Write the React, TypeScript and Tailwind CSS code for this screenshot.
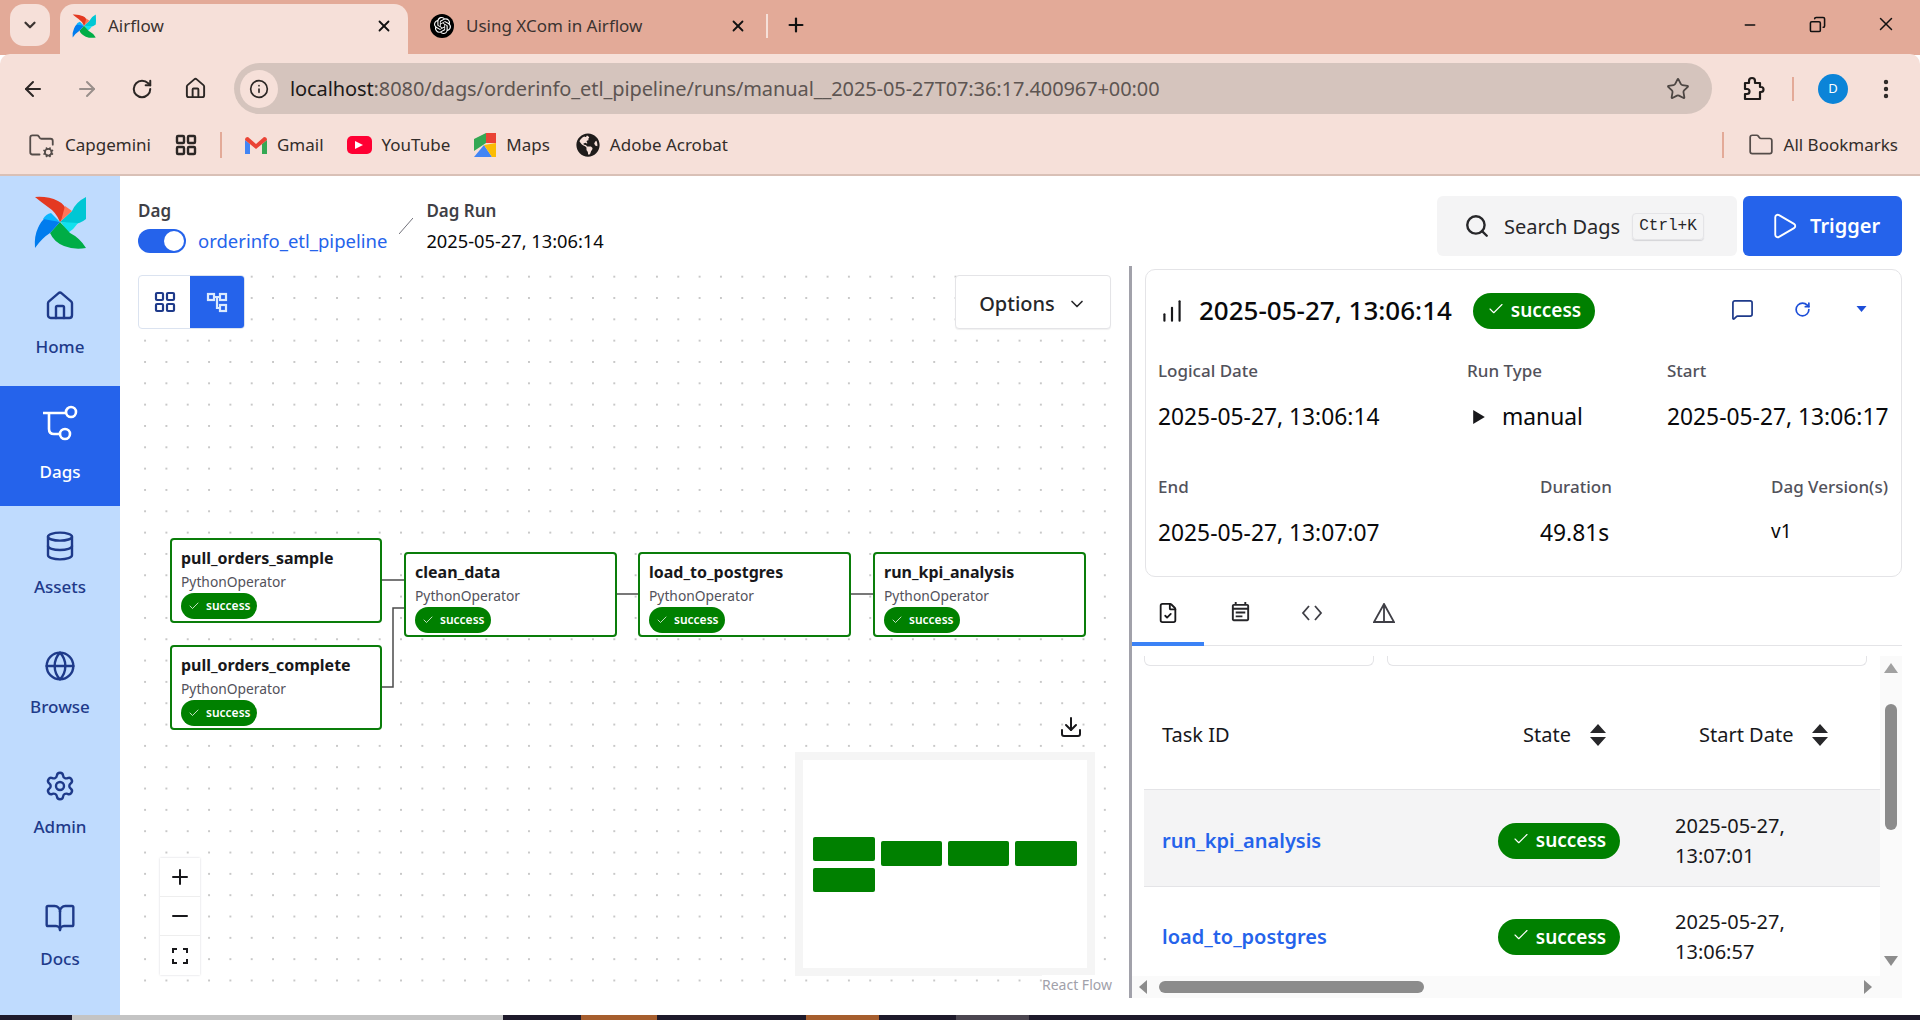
import React from "react";
import { ArrowLeft, ArrowRight, RotateCw, Home, Info, Star, Folder, FolderCog, LayoutGrid, Search, Play, Database, Globe, Settings, BookOpen, ChevronDown, MessageSquare, Check, Plus, Minus, Download, X, FileCheck, MoreVertical, Copy, ChartNoAxesColumnIncreasing } from "lucide-react";
import { MdOutlineEventNote } from "react-icons/md";
import { SiOpenai } from "react-icons/si";
import { FaGlobeAmericas } from "react-icons/fa";

function Pinwheel({ className }: { className: string }) {
  return (
    <svg viewBox="0 0 52 53" className={className}>
      <path d="M52 1 Q53 14 52 23 Q46 28 39 28 L26 26 L38 15 Q42 6 52 1Z" fill="#00c7d4" />
      <path d="M27 26 L44 27 Q40 33 34 37Z" fill="#11e1ee" />
      <path d="M52 52 Q40 54 30 50 Q20 46 16 37 L26 26 L36 37 Q46 42 52 52Z" fill="#00ad46" />
      <path d="M1 52 Q0 40 4 32 Q7 25 12 21 L26 26 L16 37 Q8 42 1 52Z" fill="#017cee" />
      <path d="M26 26 L9 23 Q12 18 17 17Z" fill="#0cb6ff" />
      <path d="M1 1 Q14 0 24 5 Q33 9 32 18 L26 26 Q22 16 14 11 Q7 6 1 1Z" fill="#e43921" />
      <path d="M31 10 L38 15 L27 25Z" fill="#ff7557" />
    </svg>
  );
}

function DagIcon() {
  return (
    <svg viewBox="0 0 38 38" className="w-[38px] h-[38px] mb-[4px]" fill="none" stroke="white" strokeWidth="2.6">
      <circle cx="30" cy="7" r="5" />
      <circle cx="24" cy="29" r="5" />
      <path d="M2 8 H25 M8 8 V24 Q8 29 13 29 H19" />
    </svg>
  );
}

function Sort() {
  return (
    <svg viewBox="0 0 16 22" className="w-[16px] h-[22px]" fill="#27272a">
      <path d="M8 0 L16 9 H0Z M0 13 H16 L8 22Z" />
    </svg>
  );
}

function Badge({ size }: { size: "sm" | "lg" }) {
  if (size === "sm") {
    return (
      <span className="inline-flex items-center w-fit h-[26px] px-[7px] gap-[6px] rounded-full bg-[#008000] text-white text-[12px] font-semibold">
        <Check size={12} strokeWidth={1.5} />
        success
      </span>
    );
  }
  return (
    <span className="inline-flex items-center justify-center w-[122px] h-[36px] gap-[6px] rounded-full bg-[#008000] text-white text-[19px] font-semibold">
      <Check size={18} strokeWidth={1.5} className="-mt-[4px]" />
      success
    </span>
  );
}

function TaskNode({ name, style }: { name: string; style: React.CSSProperties }) {
  return (
    <div style={style} className="absolute h-[85px] flex flex-col border-[2px] border-[#0a7d0a] rounded-[4px] bg-white pl-[9px] pt-[6px]">
      <span className="text-[16px] leading-[25px] font-bold text-[#18181b]">{name}</span>
      <span className="text-[13.8px] leading-[22px] text-[#52525b]">PythonOperator</span>
      <Badge size="sm" />
    </div>
  );
}

function NavItem({ label, icon, active, cls }: { label: string; icon: React.ReactNode; active?: boolean; cls: string }) {
  return (
    <div className={`flex flex-col items-center justify-center gap-[13px] pb-[3px] w-full ${cls} ${active ? "bg-[#2563eb] text-white" : "text-[#1e3a8a]"}`}>
      {icon}
      <span className="text-[17px] leading-[24px] font-medium">{label}</span>
    </div>
  );
}

function Bookmark({ icon, label, cls }: { icon: React.ReactNode; label: string; cls: string }) {
  return (
    <div className={`flex items-center gap-[10px] ${cls}`}>
      {icon}
      <span>{label}</span>
    </div>
  );
}

function Field({ label, value, cls }: { label: string; value: React.ReactNode; cls: string }) {
  return (
    <div className={`flex flex-col ${cls}`}>
      <span className="text-[17px] leading-[24px] font-medium text-[#52525b] whitespace-nowrap">{label}</span>
      <span className="mt-[22px] text-[22.8px] leading-[24px] text-[#09090b] whitespace-nowrap">{value}</span>
    </div>
  );
}

function Row({ name, d1, d2, cls }: { name: string; d1: string; d2: string; cls: string }) {
  return (
    <div className={`flex items-center ${cls}`}>
      <span className="w-[354px] pl-[18px] text-[20px] font-semibold text-[#2563eb]">{name}</span>
      <div className="w-[177px]"><Badge size="lg" /></div>
      <div className="text-[20px] leading-[30px] text-[#18181b]">
        <div>{d1}</div>
        <div>{d2}</div>
      </div>
    </div>
  );
}

const dots = "bg-[radial-gradient(#c8c8c8_1px,transparent_1.2px)] bg-[length:21.33px_21.33px] bg-[position:-3.6px_0px]";

export default function App() {
  return (
    <div className="w-[1920px] h-[1020px] flex flex-col overflow-hidden bg-white font-['Noto_Sans',sans-serif]">
      {/* Browser tab strip */}
      <div className="h-[55px] shrink-0 bg-[#e3aa98] flex items-end text-[#3b3330] text-[17px]">
        <div className="ml-[10px] mb-[9px] w-[40px] h-[42px] rounded-[14px] bg-[#f6e0d9] flex items-center justify-center">
          <ChevronDown size={18} strokeWidth={3} />
        </div>
        <div className="ml-[10px] w-[348px] h-[51px] rounded-t-[14px] bg-[#f6e0d9] flex items-center pl-[12px] pb-[8px]">
          <Pinwheel className="w-[24px] h-[24px]" />
          <span className="ml-[12px] flex-1">Airflow</span>
          <X size={18} strokeWidth={2.4} className="mr-[15px] text-[#111]" />
        </div>
        <div className="w-[360px] h-[51px] flex items-center pl-[22px] pb-[8px]">
          <span className="w-[24px] h-[24px] rounded-full bg-black flex items-center justify-center">
            <SiOpenai size={17} color="white" />
          </span>
          <span className="ml-[12px] flex-1">Using XCom in Airflow</span>
          <X size={18} strokeWidth={2.4} className="mr-[19px] text-[#111]" />
          <span className="w-[2px] h-[24px] bg-[#f6e0d9]" />
        </div>
        <Plus size={22} strokeWidth={2.4} className="ml-[17px] mb-[19px] text-[#111]" />
        <div className="flex-1" />
        <Minus size={16} strokeWidth={2.4} className="mb-[22px] text-[#111]" />
        <Copy size={17} strokeWidth={2.2} className="ml-[51px] mb-[22px] text-[#111] -scale-x-100" />
        <X size={22} strokeWidth={1.6} className="ml-[49px] mb-[20px] mr-[23px] text-[#111]" />
      </div>
      {/* Toolbar */}
      <div className="h-[69px] shrink-0 bg-[#f6e0d9] flex items-center text-[#2c2725] rounded-t-[10px] -mt-px">
        <ArrowLeft size={24} strokeWidth={2} className="ml-[21px]" />
        <ArrowRight size={24} strokeWidth={2} className="ml-[30px] text-[#998f8b]" />
        <RotateCw size={22} strokeWidth={2.2} className="ml-[32px]" />
        <Home size={23} strokeWidth={2} className="ml-[31px]" />
        <div className="ml-[27px] w-[1478px] h-[51px] rounded-full bg-[#d5c4bd] flex items-center pl-[6px] pr-[22px]">
          <span className="w-[38px] h-[38px] rounded-full bg-[#f6e0d9] flex items-center justify-center">
            <Info size={20} strokeWidth={2} />
          </span>
          <span className="ml-[12px] flex-1 text-[20px] tracking-[-0.1px] text-[#5d5552]">
            <span className="text-[#1c1a19]">localhost</span>:8080/dags/orderinfo_etl_pipeline/runs/manual__2025-05-27T07:36:17.400967+00:00
          </span>
          <Star size={24} strokeWidth={1.8} className="text-[#4d4643]" />
        </div>
        <svg viewBox="0 0 24 26" className="ml-[29px] w-[24px] h-[26px]" fill="none" stroke="#1f1b1a" strokeWidth="2.2" strokeLinejoin="round">
          <path d="M4 7 H8 V5 A3 3 0 0 1 14 5 V7 H19 V11 H20 A2.5 2.5 0 0 1 20 16 H19 V23 H4 V18 H6 A2.5 2.5 0 0 0 6 13 H4Z" />
        </svg>
        <span className="ml-[27px] w-[2px] h-[24px] bg-[#e3aa98]" />
        <span className="ml-[24px] w-[30px] h-[30px] rounded-full bg-[#0b84d8] text-white text-[13px] flex items-center justify-center">D</span>
        <MoreVertical size={24} strokeWidth={2.4} className="ml-[26px]" />
      </div>
      {/* Bookmarks */}
      <div className="h-[53px] shrink-0 pb-[7px] bg-[#f6e0d9] border-b-[2px] border-[#d9c0b6] flex items-center text-[17px] text-[#332d2a]">
        <Bookmark cls="ml-[28px]" label="Capgemini" icon={<FolderCog size={27} strokeWidth={1.6} className="text-[#544c49]" />} />
        <LayoutGrid size={24} strokeWidth={2.4} className="ml-[23px] text-[#2c2725]" />
        <span className="ml-[22px] w-[2px] h-[26px] bg-[#e3aa98]" />
        <Bookmark cls="ml-[23px]" label="Gmail" icon={
          <svg viewBox="0 0 22 17" className="w-[22px] h-[17px]"><path d="M0 3 V17 H5 V7Z" fill="#4285f4" /><path d="M22 3 V17 H17 V7Z" fill="#34a853" /><path d="M0 3 Q0 0 3 0 L11 7 L19 0 Q22 0 22 3 L11 12Z" fill="#ea4335" /></svg>
        } />
        <Bookmark cls="ml-[23px]" label="YouTube" icon={
          <span className="w-[25px] h-[18px] rounded-[5px] bg-[#ff0033] flex items-center justify-center"><svg viewBox="0 0 8 8" className="w-[8px] h-[8px]"><path d="M0 0 L8 4 L0 8Z" fill="white" /></svg></span>
        } />
        <Bookmark cls="ml-[24px]" label="Maps" icon={
          <svg viewBox="0 0 22 24" className="w-[22px] h-[24px]"><path d="M0 6 L12 0 V10 L0 18Z" fill="#34a853" /><path d="M12 0 L22 0 V10 L12 10Z" fill="#ea4335" /><path d="M0 24 L10 12 L18 24Z" fill="#4285f4" /><path d="M10 12 L22 10 V24 H18Z" fill="#fbbc04" /></svg>
        } />
        <Bookmark cls="ml-[26px]" label="Adobe Acrobat" icon={<FaGlobeAmericas size={24} className="text-[#1f1c1b]" />} />
        <div className="flex-1" />
        <span className="w-[2px] h-[26px] bg-[#e3aa98]" />
        <Bookmark cls="ml-[24px] mr-[22px]" label="All Bookmarks" icon={<Folder size={26} strokeWidth={1.6} className="text-[#544c49]" />} />
      </div>
      {/* Airflow app */}
      <div className="flex flex-1 min-h-0">
        <nav className="w-[120px] shrink-0 bg-[#bfdbfe] flex flex-col items-center">
          <div className="h-[90px] shrink-0 flex items-center justify-center pt-[2px]">
            <Pinwheel className="w-[52px] h-[53px]" />
          </div>
          <NavItem cls="h-[120px]" label="Home" icon={<Home size={32} strokeWidth={1.8} />} />
          <NavItem cls="h-[120px]" active label="Dags" icon={<DagIcon />} />
          <NavItem cls="h-[120px]" label="Assets" icon={<Database size={32} strokeWidth={1.8} />} />
          <NavItem cls="h-[120px]" label="Browse" icon={<Globe size={32} strokeWidth={1.8} />} />
          <NavItem cls="h-[120px]" label="Admin" icon={<Settings size={32} strokeWidth={1.8} />} />
          <NavItem cls="h-[144px]" label="Docs" icon={<BookOpen size={32} strokeWidth={1.8} />} />
        </nav>
        <main className="flex-1 min-w-0 flex flex-col">
          <header className="h-[90px] shrink-0 flex pl-[18px] pr-[18px]">
            <div className="pt-[23px]">
              <div className="text-[17px] leading-[24px] font-semibold text-[#3f3f46]">Dag</div>
              <div className="flex items-center h-[32px] mt-[2px]">
                <span className="w-[48px] h-[24px] rounded-full bg-[#2563eb] flex items-center justify-end pr-[2px]"><span className="w-[20px] h-[20px] rounded-full bg-white" /></span>
                <span className="ml-[12px] text-[18.5px] text-[#2563eb]">orderinfo_etl_pipeline</span>
              </div>
            </div>
            <svg viewBox="0 0 14 16" className="w-[14px] h-[16px] ml-[12px] mt-[42px]"><path d="M0 16 L14 0" stroke="#71717a" strokeWidth="1" /></svg>
            <div className="pt-[23px] ml-[13px]">
              <div className="text-[17px] leading-[24px] font-semibold text-[#3f3f46]">Dag Run</div>
              <div className="text-[18.25px] leading-[32px] mt-[2px] text-[#09090b]">2025-05-27, 13:06:14</div>
            </div>
            <div className="flex-1" />
            <div className="mt-[20px] w-[300px] h-[60px] rounded-[6px] bg-[#f4f4f5] flex items-center pl-[27px] text-[#27272a]">
              <Search size={26} strokeWidth={2.2} />
              <span className="ml-[14px] pt-[1px] text-[20px]">Search Dags</span>
              <span className="ml-[12px] h-[27px] px-[6px] flex items-center border border-[#e4e4e7] rounded-[4px] shadow-[0_1px_1px_#d4d4d8] font-['Liberation_Mono',monospace] text-[16px]">Ctrl+K</span>
            </div>
            <div className="ml-[6px] mt-[20px] w-[159px] h-[60px] rounded-[6px] bg-[#2563eb] flex items-center pl-[26px] text-white">
              <Play size={30} strokeWidth={1.5} />
              <span className="ml-[11px] text-[20px] font-semibold">Trigger</span>
            </div>
          </header>
          <div className="flex-1 min-h-0 flex">
            {/* Graph */}
            <section className="w-[1009px] shrink-0 pl-[18px] pr-[17px] pb-[25px]">
              <div className={`relative h-full w-full ${dots}`}>
                <div className="absolute left-0 top-[9px] right-[1px] flex justify-between">
                  <div className="flex h-[54px] w-[107px] rounded-[4px] border border-[#dbe3f0] bg-white overflow-hidden">
                    <span className="flex-1 flex items-center justify-center text-[#1e3a8a]"><LayoutGrid size={24} strokeWidth={2.2} /></span>
                    <span className="w-[54px] bg-[#2563eb] flex items-center justify-center"><svg viewBox="0 0 24 24" className="w-[24px] h-[24px]" fill="none" stroke="#dbeafe" strokeWidth="2.2"><rect x="3" y="4" width="6" height="6" /><rect x="15" y="4" width="6" height="6" /><rect x="15" y="15" width="6" height="6" /><path d="M9 7 H15 M12 7 V18 H15" /></svg></span>
                  </div>
                  <div className="w-[156px] h-[54px] pt-[3px] rounded-[4px] border border-[#e4e4e7] bg-white flex items-center justify-center gap-[12px] text-[20px] font-medium text-[#27272a] shadow-[0_1px_1px_#f1f1f1]">
                    Options <ChevronDown size={20} strokeWidth={2} />
                  </div>
                </div>
                <svg className="absolute left-[244px] top-[310px] w-[510px] h-[120px]" viewBox="0 0 510 120" fill="none" stroke="#4b4b4b" strokeWidth="1.5">
                  <path d="M0 4 H22" />
                  <path d="M0 111 H11 V32 H22" />
                  <path d="M235 18 H258" />
                  <path d="M469 18 H491" />
                </svg>
                <TaskNode name="pull_orders_sample" style={{ left: 32, top: 272, width: 212 }} />
                <TaskNode name="pull_orders_complete" style={{ left: 32, top: 379, width: 212 }} />
                <TaskNode name="clean_data" style={{ left: 266, top: 286, width: 213 }} />
                <TaskNode name="load_to_postgres" style={{ left: 500, top: 286, width: 213 }} />
                <TaskNode name="run_kpi_analysis" style={{ left: 735, top: 286, width: 213 }} />
                <Download size={24} strokeWidth={2} className="absolute left-[921px] top-[449px] text-[#18181b]" />
                <div className="absolute left-[657px] top-[486px] w-[300px] h-[224px] border-[8px] border-[#f5f5f5] bg-white">
                  <div className="pl-[10px] pt-[77px] flex gap-[6px]">
                    <div className="flex flex-col gap-[7px]">
                      <div className="w-[62px] h-[24px] bg-[#008000] rounded-[2px]" />
                      <div className="w-[62px] h-[24px] bg-[#008000] rounded-[2px]" />
                    </div>
                    <div className="mt-[4px] w-[61px] h-[25px] bg-[#008000] rounded-[2px]" />
                    <div className="mt-[4px] w-[61px] h-[25px] bg-[#008000] rounded-[2px]" />
                    <div className="mt-[4px] w-[62px] h-[25px] bg-[#008000] rounded-[2px]" />
                  </div>
                </div>
                <span className="absolute left-[904px] top-[709px] bg-white text-[14px] leading-[20px] text-[#a1a1aa]">React Flow</span>
                <div className="absolute left-[22px] top-[592px] w-[40px] bg-white flex flex-col shadow-[0_0_2px_#d4d4d8] text-[#18181b]">
                  <span className="h-[39px] flex items-center justify-center border-b border-[#eeeeee]"><Plus size={24} strokeWidth={2} /></span>
                  <span className="h-[39px] flex items-center justify-center border-b border-[#eeeeee]"><Minus size={24} strokeWidth={2} /></span>
                  <span className="h-[39px] flex items-center justify-center">
                    <svg viewBox="0 0 16 16" className="w-[16px] h-[16px]" fill="none" stroke="#18181b" strokeWidth="2"><path d="M1 5 V1 H5 M11 1 H15 V5 M15 11 V15 H11 M5 15 H1 V11" /></svg>
                  </span>
                </div>
              </div>
            </section>
            {/* Divider */}
            <div className="w-[3px] shrink-0 h-[732px] bg-[#a1a1aa]" />
            {/* Details */}
            <section className="flex-1 min-w-0 h-[732px] flex flex-col">
              <div className="ml-[13px] mr-[18px] mt-[3px] h-[308px] shrink-0 border border-[#e4e4e7] rounded-[10px] flex flex-col pl-[12px]">
                <div className="h-[81px] shrink-0 flex items-center">
                  <ChartNoAxesColumnIncreasing size={26} strokeWidth={2} className="ml-[1px] text-[#18181b]" />
                  <span className="ml-[14px] text-[26px] font-medium text-[#09090b] w-[274px]">2025-05-27, 13:06:14</span>
                  <Badge size="lg" />
                  <div className="flex-1" />
                  <MessageSquare size={23} strokeWidth={1.8} className="-mt-[3px] text-[#1e3a8a]" />
                  <RotateCw size={17} strokeWidth={2.4} className="-mt-[3px] ml-[40px] text-[#1d4ed8]" />
                  <svg viewBox="0 0 10 6" className="-mt-[3px] ml-[45px] mr-[34px] w-[11px] h-[6px]"><path d="M0 0 H10 L5 6Z" fill="#1d4ed8" /></svg>
                </div>
                <div className="flex pt-[8px] h-[124px] shrink-0">
                  <Field cls="w-[309px]" label="Logical Date" value="2025-05-27, 13:06:14" />
                  <Field cls="w-[200px]" label="Run Type" value={<span className="flex items-center gap-[17px]"><svg viewBox="0 0 10 12" className="ml-[6px] w-[12px] h-[14px]"><path d="M0 0 L10 6 L0 12Z" fill="#18181b" /></svg>manual</span>} />
                  <Field cls="w-[220px]" label="Start" value="2025-05-27, 13:06:17" />
                </div>
                <div className="flex">
                  <Field cls="w-[382px]" label="End" value="2025-05-27, 13:07:07" />
                  <Field cls="w-[231px]" label="Duration" value="49.81s" />
                  <Field cls="w-[120px]" label="Dag Version(s)" value={<span className="block -mt-[2px] text-[19px]">v1</span>} />
                </div>
              </div>
              <div className="mt-[12px] mr-[18px] h-[57px] shrink-0 border-b border-[#e4e4e7] flex text-[#27272a]">
                <span className="w-[72px] h-[57px] border-b-[4px] border-[#3b82f6] flex items-center justify-center pb-[5px]"><FileCheck size={22} strokeWidth={2} className="text-[#18181b]" /></span>
                <span className="w-[72px] flex items-center justify-center pb-[9px]"><MdOutlineEventNote size={23} /></span>
                <span className="w-[72px] flex items-center justify-center pb-[9px]">
                  <svg viewBox="0 0 24 24" className="w-[24px] h-[24px]" fill="none" stroke="#3f3f46" strokeWidth="1.8"><path d="M9 5 L3 12 L9 19 M15 5 L21 12 L15 19" /></svg>
                </span>
                <span className="w-[72px] flex items-center justify-center pb-[9px]">
                  <svg viewBox="0 0 22 20" className="w-[22px] h-[20px]" fill="none" stroke="#3f3f46" strokeWidth="1.8"><path d="M11 1 L21 19 H1Z M11 1 V19" /></svg>
                </span>
              </div>
              <div className="mt-[10px] mr-[18px] flex-1 min-h-0 flex flex-col">
                <div className="flex-1 min-h-0 flex">
                  <div className="flex-1 min-w-0 overflow-hidden pl-[12px]">
                    <div className="flex gap-[13px] h-[10px]">
                      <div className="w-[230px] border border-t-0 border-[#e4e4e7] rounded-b-[6px]" />
                      <div className="flex-1 mr-[13px] border border-t-0 border-[#e4e4e7] rounded-b-[6px]" />
                    </div>
                    <div className="h-[124px] pt-[14px] border-b border-[#e4e4e7] flex items-center text-[20px] text-[#18181b]">
                      <span className="w-[379px] pl-[18px]">Task ID</span>
                      <span className="flex items-center w-[176px] gap-[19px]">State <Sort /></span>
                      <span className="flex items-center gap-[19px]">Start Date <Sort /></span>
                    </div>
                    <Row cls="h-[97px] pt-[5px] bg-[#f4f4f5] border-b border-[#e4e4e7]" name="run_kpi_analysis" d1="2025-05-27," d2="13:07:01" />
                    <Row cls="h-[92px] pt-[8px]" name="load_to_postgres" d1="2025-05-27," d2="13:06:57" />
                  </div>
                  <div className="w-[22px] shrink-0 bg-[#fafafa] flex flex-col items-center">
                    <svg viewBox="0 0 14 10" className="mt-[7px] w-[14px] h-[10px]"><path d="M7 0 L14 10 H0Z" fill="#a1a1a1" /></svg>
                    <div className="mt-[31px] w-[12px] h-[126px] rounded-full bg-[#8c8c8c]" />
                    <div className="flex-1" />
                    <svg viewBox="0 0 14 10" className="mb-[10px] w-[14px] h-[10px]"><path d="M0 0 H14 L7 10Z" fill="#8c8c8c" /></svg>
                  </div>
                </div>
                <div className="h-[22px] shrink-0 bg-[#fafafa] flex items-center pl-[7px]">
                  <svg viewBox="0 0 8 14" className="w-[8px] h-[14px]"><path d="M8 0 V14 L0 7Z" fill="#8c8c8c" /></svg>
                  <div className="ml-[12px] w-[265px] h-[12px] rounded-full bg-[#8c8c8c]" />
                  <div className="flex-1" />
                  <svg viewBox="0 0 8 14" className="mr-[30px] w-[8px] h-[14px]"><path d="M0 0 V14 L8 7Z" fill="#8c8c8c" /></svg>
                </div>
              </div>
            </section>
          </div>
        </main>
      </div>
      {/* Taskbar strip */}
      <div className="h-[5px] shrink-0 bg-[#1e1a2b] flex">
        <div className="ml-[72px] w-[431px] bg-[#c4c4c4]" />
        <div className="ml-[78px] w-[76px] bg-[#a65e2e]" />
        <div className="ml-[149px] w-[73px] bg-[#a65e2e]" />
        <div className="ml-[77px] w-[73px] bg-[#4b4650]" />
      </div>
    </div>
  );
}
